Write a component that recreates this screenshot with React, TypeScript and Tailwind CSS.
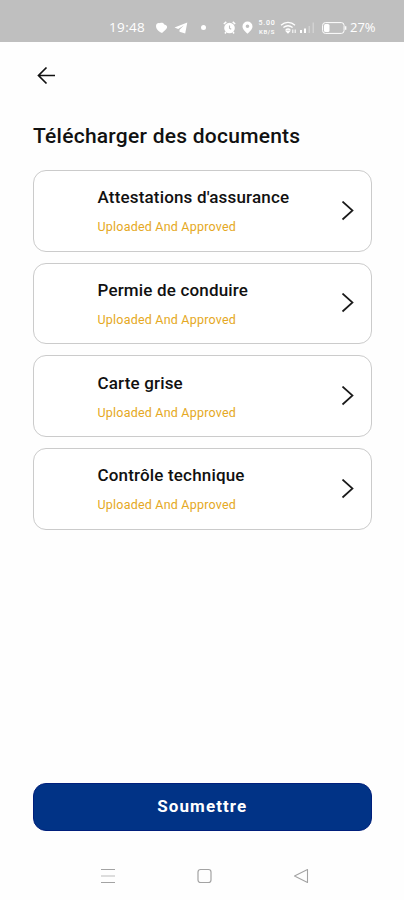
type DocumentItem = {
  title: string;
  status: string;
};

const documents: DocumentItem[] = [
  { title: "Attestations d'assurance", status: "Uploaded And Approved" },
  { title: "Permie de conduire", status: "Uploaded And Approved" },
  { title: "Carte grise", status: "Uploaded And Approved" },
  { title: "Contrôle technique", status: "Uploaded And Approved" },
];

function StatusBar() {
  return (
    <header className="flex h-[41.5px] shrink-0 items-center bg-[#bfbfbf] pt-[14px] pl-[109px] font-['Open_Sans',sans-serif] text-white">
      <span className="w-[37px] shrink-0 text-[13.5px] leading-none tracking-[0.35px] whitespace-nowrap">19:48</span>

      <svg className="ml-[9px] shrink-0" width="13" height="12" viewBox="0 0 13 12" fill="currentColor">
        <path d="M1 4C1 1.800 3 .5 4.800 1.200 6.500.3 8.700.8 9.300 2.500c2 .2 3.400 1.900 2.600 3.600C11 8 8.800 9.500 7 11 4.500 10 1 7.500 1 4Z" />
      </svg>
      <svg className="ml-[6px] shrink-0" width="14" height="12" viewBox="0 0 14 12" fill="currentColor">
        <path d="M13.300.500.500 5.600l3.700 1.500L9.800 3.500 5.500 7.700v2l5.700 1.800Z" />
      </svg>
      <span className="ml-[13px] size-[5px] shrink-0 rounded-full bg-white" />

      <svg className="ml-[17px] shrink-0" width="13" height="13" viewBox="0 0 13 13">
        <circle cx="6.5" cy="7" r="5.3" fill="currentColor" />
        <path d="M.8 3 3.300.900M12.200 3 9.700.900M3 11 2 12.500M10 11l1 1.500" stroke="currentColor" strokeWidth="1.5" />
        <path d="M6.500 4.500v2.700l1.700 1" stroke="#bfbfbf" strokeWidth="1.1" fill="none" />
      </svg>
      <svg className="ml-[6px] shrink-0" width="11" height="13" viewBox="0 0 11 13" fill="currentColor">
        <path
          fillRule="evenodd"
          d="M5.500.500a5 5 0 0 0-5 5c0 3 3 5.200 5 7.200 2-2 5-4.200 5-7.200a5 5 0 0 0-5-5Zm0 3a1.800 1.800 0 1 1 0 3.600 1.800 1.800 0 0 1 0-3.600Z"
        />
      </svg>
      <span className="ml-[4px] flex w-[20px] shrink-0 flex-col items-center gap-px font-[Roboto,sans-serif] text-[7px] leading-[7px] font-medium">
        <span className="tracking-[0.8px]">5.00</span>
        <span className="text-[6px] leading-[7px] tracking-[0.6px]">KB/S</span>
      </span>
      <svg className="ml-[3px] shrink-0" width="18" height="13" viewBox="0 0 18 13" fill="none" stroke="currentColor" strokeWidth="1.3">
        <path d="M1 4.200c4-3.700 10-3.700 14 0M3.400 6.600c2.800-2.300 6.400-2.300 9.200 0M5.700 8.900c1.400-1.100 3.200-1.100 4.600 0" />
        <path d="m6.500 10.200 1.500 1.600 1.500-1.600Z" fill="currentColor" />
        <path d="M12.800 12V8.500M15.200 8.500V12" strokeWidth="1" />
      </svg>
      <svg className="ml-[1px] shrink-0" width="16" height="13" viewBox="0 0 16 13" fill="currentColor">
        <path d="M1 9h2v3H1zM5 7.500h2V12H5z" />
        <path d="M9.500 5H11v7H9.500zM13.500 1.500H15V12h-1.500z" opacity=".3" />
      </svg>
      <svg className="ml-[7px] shrink-0" width="25" height="12" viewBox="0 0 25 12">
        <rect x=".6" y=".6" width="21.5" height="10.8" rx="2.8" fill="none" stroke="currentColor" strokeWidth="1" />
        <rect x="2" y="2" width="5.5" height="8" rx="1.5" fill="currentColor" />
        <path d="M23.700 4.200v3.600" stroke="currentColor" strokeWidth="1.3" />
      </svg>
      <span className="ml-[3px] text-[13px] leading-none">27%</span>
    </header>
  );
}

function DocumentCard({ title, status }: DocumentItem) {
  return (
    <button
      type="button"
      className="flex h-[81.5px] w-full shrink-0 items-center justify-between rounded-[13px] border-[1.5px] border-[#cbcbcb] bg-white pr-[17px] pl-16 text-left"
    >
      <span className="flex flex-col pt-px">
        <span className="text-[17px] leading-5 font-medium tracking-[0.17px] whitespace-nowrap text-[#111]">
          {title}
        </span>
        <span className="mt-3 text-[12.5px] leading-4 tracking-[0.21px] whitespace-nowrap text-[#e5a823]">
          {status}
        </span>
      </span>
      <svg width="13" height="20" viewBox="0 0 13 20" fill="none" stroke="#1a1a1a" strokeWidth="1.7">
        <path d="M1.500.500 11.500 9.500 1.500 18.500" />
      </svg>
    </button>
  );
}

function NavigationBar() {
  return (
    <nav className="flex h-[49px] shrink-0 items-center justify-between pr-[95px] pl-[100px] text-[#a3a3a3]">
      <svg width="16" height="16" viewBox="0 0 16 16" stroke="currentColor" strokeWidth="1.2">
        <path d="M1 1.500h14M1 14.500h14" />
        <path d="M1 8h14" opacity=".6" />
      </svg>
      <svg width="16" height="16" viewBox="0 0 16 16" fill="none" stroke="currentColor" strokeWidth="1.2">
        <rect x="1" y="1.5" width="13" height="13" rx="2.5" />
      </svg>
      <svg width="16" height="16" viewBox="0 0 16 16" fill="none" stroke="currentColor" strokeWidth="1.1" strokeLinejoin="round">
        <path d="M14.500 1.500v13L1.500 8Z" />
      </svg>
    </nav>
  );
}

export default function App() {
  return (
    <div className="flex h-[900px] w-full flex-col overflow-hidden bg-[#fefefe] font-[Roboto,sans-serif]">
      <StatusBar />

      <main className="flex min-h-0 flex-1 flex-col pt-[24.5px] pr-8 pl-[32.5px]">
        <button type="button" aria-label="Retour" className="ml-[4.5px] size-[19px]">
          <svg width="19" height="19" viewBox="0 0 19 19" fill="none" stroke="#111" strokeWidth="1.7">
            <path d="M18 9.500H1.500M9.500 1.500l-8 8 8 8" />
          </svg>
        </button>

        <h1 className="mt-[37px] ml-[0.5px] text-[21px] leading-7 font-medium tracking-[0.25px] whitespace-nowrap text-[#111]">
          Télécharger des documents
        </h1>

        <div className="mt-5 flex flex-col gap-[11.2px]">
          {documents.map((doc) => (
            <DocumentCard key={doc.title} title={doc.title} status={doc.status} />
          ))}
        </div>

        <button
          type="button"
          className="mt-auto mb-5 h-[48.5px] w-full shrink-0 rounded-[13px] border border-[#001f7c] bg-[#013386] text-[17px] font-bold tracking-[1.1px] text-white"
        >
          Soumettre
        </button>
      </main>

      <NavigationBar />
    </div>
  );
}
